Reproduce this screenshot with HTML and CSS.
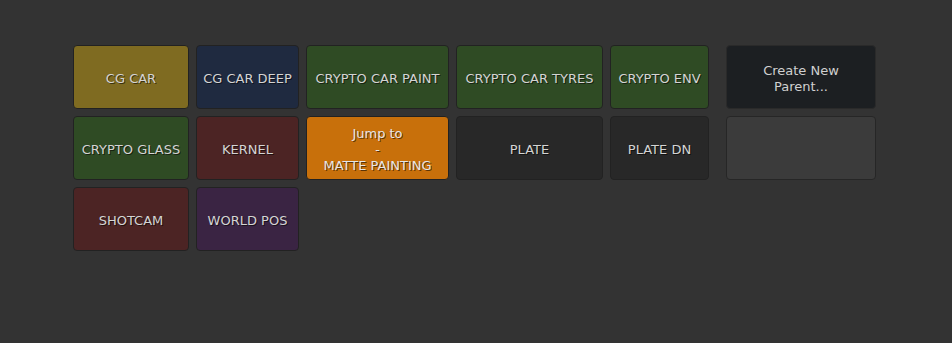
FILE: index.html
```html
<!DOCTYPE html>
<html lang="en">

<head>
    <meta charset="UTF-8">
    <meta name="viewport" content="width=device-width, initial-scale=1.0">
    <title>Shuffle Parents</title>
    <link rel="stylesheet" href="styles.css">
</head>

<body>
    <div class="panel">
        <div class="layer-grid">
            <button class="layer yellow">CG CAR</button>
            <button class="layer navy">CG CAR DEEP</button>
            <button class="layer green">CRYPTO CAR PAINT</button>
            <button class="layer green">CRYPTO CAR TYRES</button>
            <button class="layer green">CRYPTO ENV</button>

            <button class="layer green">CRYPTO GLASS</button>
            <button class="layer red">KERNEL</button>
            <button class="layer orange">Jump to<br>-<br>MATTE PAINTING</button>
            <button class="layer dark">PLATE</button>
            <button class="layer dark">PLATE DN</button>

            <button class="layer red">SHOTCAM</button>
            <button class="layer purple">WORLD POS</button>
        </div>

        <div class="actions">
            <button class="layer create">Create New<br>Parent...</button>
            <button class="layer empty"></button>
        </div>
    </div>
</body>

</html>
```

FILE: styles.css
```css
body {
    font-family: "DejaVu Sans", Verdana, sans-serif;
    margin: 0;
    padding: 0;
    background-color: #333333;
}

.panel {
    display: flex;
    align-items: flex-start;
    gap: 17px;
    padding: 45px 0 0 73px;
}

.layer-grid {
    display: grid;
    grid-template-columns: 116px 103px 143px 147px 99px;
    grid-auto-rows: 64px;
    gap: 7px;
}

.actions {
    display: grid;
    grid-template-columns: 150px;
    grid-auto-rows: 64px;
    gap: 7px;
}

.layer {
    box-sizing: border-box;
    margin: 0;
    padding: 4px 4px 0;
    border: 1px solid #222222;
    border-radius: 4px;
    font-family: inherit;
    font-size: 13px;
    line-height: 16px;
    color: #d4d4d4;
    text-shadow: 1px 1px 0 rgba(0, 0, 0, 0.55);
    text-align: center;
    white-space: nowrap;
    cursor: pointer;
}

.yellow {
    background: #7f6b21;
}

.navy {
    background: #1f2a40;
}

.green {
    background: #2f4b24;
}

.red {
    background: #4c2424;
}

.orange {
    background: #c8700b;
    color: #e6e6e6;
}

.dark {
    background: #282828;
}

.purple {
    background: #3a2443;
}

.create {
    background: #1c1f22;
    border-color: #2a2a2a;
    text-shadow: none;
    color: #d0d0d0;
}

.empty {
    background: #3b3b3b;
    border-color: #262626;
}
```
